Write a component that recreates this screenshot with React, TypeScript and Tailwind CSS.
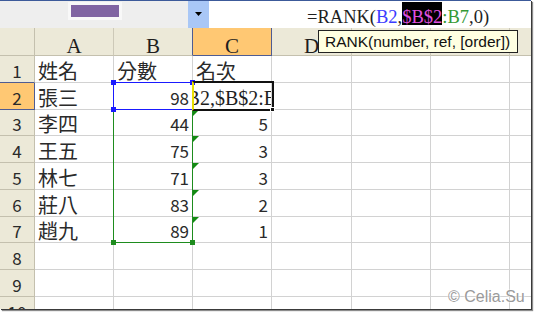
import React from 'react';

const COLS = ['w-[79px]', 'w-[79px]', 'w-[79px]', 'w-[80px]', 'w-[79px]', 'w-[79px]', 'w-[79px]'];
const LETTERS = ['A', 'B', 'C', 'D', 'E', 'F', 'G'];
const HEIGHTS = ['h-[27px]', 'h-[27px]', 'h-[26px]', 'h-[27px]', 'h-[27px]', 'h-[27px]', 'h-[26px]', 'h-[27px]', 'h-[27px]', 'h-[27px]'];

const DATA: string[][] = [
  ['姓名', '分數', '名次'],
  ['張三', '98', ''],
  ['李四', '44', '5'],
  ['王五', '75', '3'],
  ['林七', '71', '3'],
  ['莊八', '83', '2'],
  ['趙九', '89', '1'],
];

const cjk = "font-['Noto_Sans_CJK_TC',sans-serif]";
const serif = "font-['Liberation_Serif',serif]";
const seg = 'h-[23px] pt-[6px] leading-[19px] whitespace-pre';

function FormulaBar() {
  return (
    <div className="flex h-[28px] border-t border-[#3c5a9a]">
      {/* name box, blanked out */}
      <div className="w-[188px] shrink-0 bg-[#eeeeee] pl-[68px] pt-[1px]">
        <div className="w-[54px] bg-[#f8f8f8] p-[3px]">
          <div className="h-[12px] bg-[#8064a2]" />
        </div>
      </div>
      <div className="w-[21px] shrink-0 bg-[#a9c7f6] flex items-center justify-center">
        <svg width="8" height="5" viewBox="0 0 8 5">
          <path d="M0 0 H7 L3.5 4 Z" fill="#000" />
        </svg>
      </div>
      <div className={`flex-1 bg-white flex items-start pt-[1px] pl-[98px] ${serif} text-[18.5px] text-[#1e1e1e]`}>
        <span className={seg}>=RANK(</span>
        <span className={`${seg} text-[#3b3bff]`}>B2</span>
        <span className={seg}>,</span>
        <span className={`${seg} bg-black text-[#e050e0]`}>$B$2</span>
        <span className={`${seg} text-[#339933]`}>:B7</span>
        <span className={seg}>,0)</span>
      </div>
    </div>
  );
}

function HeaderRow() {
  return (
    <div className="flex h-[28px]">
      <div className="w-[35px] shrink-0 bg-[#ece9d8] border-r border-b border-[#c4c0ae]" />
      {LETTERS.map((l, i) => {
        const active = i === 2;
        const edge = i === 1 || i === 2 ? 'border-r-[#4f5c92]' : 'border-r-[#cdc9b8]';
        return (
          <div
            key={l}
            className={`${COLS[i]} shrink-0 border-r border-b ${edge} ${
              active ? 'bg-[#ffc873] border-b-[#4f5c92]' : 'bg-[#ece9d8] border-b-[#c4c0ae]'
            } flex items-end justify-center leading-[18px] ${serif} text-[21px] text-[#1e1e1e]`}
          >
            {l}
          </div>
        );
      })}
    </div>
  );
}

function Row({ n }: { n: number }) {
  const data = DATA[n - 1];
  const active = n === 2;
  return (
    <div className={`flex ${HEIGHTS[n - 1]}`}>
      <div
        className={`w-[35px] shrink-0 border-r border-b flex items-end justify-center pb-[1px] leading-[20px] ${cjk} text-[17px] text-[#2a2a2a] ${
          active
            ? 'bg-[#ffc873] border-r-[#4f5c92] border-b-[#4f5c92]'
            : n === 1
            ? 'bg-[#ece9d8] border-r-[#c4c0ae] border-b-[#4f5c92]'
            : 'bg-[#ece9d8] border-[#c4c0ae]'
        }`}
      >
        {n}
      </div>
      {LETTERS.map((l, i) => {
        const val = data ? data[i] ?? '' : '';
        const editing = n === 2 && i === 2;
        const num = n > 1 && (i === 1 || i === 2) && !editing;
        const flag = n > 2 && n <= 7 && i === 2;
        if (editing) {
          return (
            <div
              key={l}
              className={`${COLS[i]} shrink-0 border-r border-b border-[#d2d2d2] flex items-end overflow-hidden pb-[1px]`}
            >
              <span className={`-ml-[81px] whitespace-nowrap leading-[20px] ${serif} text-[20px] text-[#1e1e1e]`}>
                =RANK(B2,$B$2:B7,0)
              </span>
            </div>
          );
        }
        return (
          <div
            key={l}
            className={`${COLS[i]} shrink-0 relative border-r border-b border-[#d2d2d2] flex items-end pb-[1px] leading-[20px] text-[#2a2a2a] ${
              num ? `justify-end pr-[3px] ${cjk} text-[17px]` : `pl-[3px] ${cjk} text-[20px]`
            }`}
          >
            {flag && (
              <div className="absolute left-0 top-0 w-0 h-0 border-t-[6px] border-r-[6px] border-t-[#138a13] border-r-transparent" />
            )}
            {val}
          </div>
        );
      })}
    </div>
  );
}

function Handle({ className }: { className: string }) {
  return <div className={`absolute w-[5px] h-[5px] ${className}`} />;
}

export default function App() {
  return (
    <div className="w-[534px] h-[312px] bg-white">
      <div className="relative w-[531px] h-[309px] overflow-hidden bg-white shadow-[1px_1px_0_#3a3a3a,2px_2px_1px_#8c8c8c]">
        <FormulaBar />
        <HeaderRow />
        {[1, 2, 3, 4, 5, 6, 7, 8, 9, 10].map((n) => (
          <Row key={n} n={n} />
        ))}

        {/* range B2:B7 (green) */}
        <div className="absolute left-[113px] top-[82px] w-[80px] h-[161px] border border-[#1e8c1e]" />
        <Handle className="left-[111px] top-[240px] bg-[#1e8c1e]" />
        <Handle className="left-[190px] top-[240px] bg-[#1e8c1e]" />

        {/* reference B2 (blue) */}
        <div className="absolute left-[113px] top-[82px] w-[80px] h-[28px] border border-[#1a1aff]" />
        <Handle className="left-[111px] top-[80px] bg-[#1a1aff]" />
        <Handle className="left-[111px] top-[107px] bg-[#1a1aff]" />
        <Handle className="left-[190px] top-[80px] bg-[#1a1aff]" />

        {/* edited cell C2 */}
        <div className="absolute left-[192px] top-[81px] w-[82px] h-[30px] border-2 border-[#111] border-l-[#e8e000]" />
        <div className="absolute left-[270px] top-[107px] w-[5px] h-[5px] bg-[#111] border border-white" />

        {/* function tooltip */}
        <div className="absolute left-[318px] top-[30px] w-[200px] h-[23px] border border-[#222] bg-[#ffffe1] pl-[6px] font-['Liberation_Sans',sans-serif] text-[15.5px] leading-[21px] text-[#111] whitespace-nowrap">
          RANK(number, ref, [order])
        </div>

        {/* watermark */}
        <div className="absolute left-[448px] top-[285px] font-['Liberation_Sans',sans-serif] text-[16px] text-[#9a9a9a] [text-shadow:0_0_2px_#fff,0_0_2px_#fff]">
          © Celia.Su
        </div>
      </div>
    </div>
  );
}
